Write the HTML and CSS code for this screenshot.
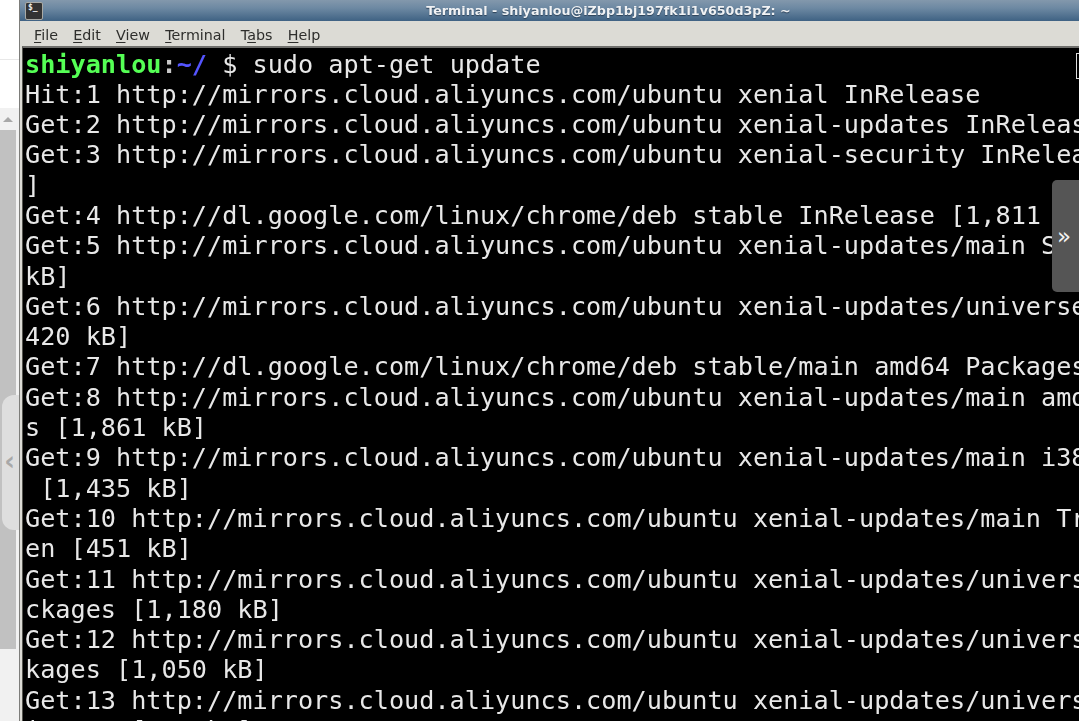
FILE: index.html
```html
<!DOCTYPE html>
<html lang="en">
<head>
<meta charset="utf-8">
<title>Terminal</title>
<link rel="stylesheet" href="styles.css">
</head>
<body>
<div class="page">
  <aside class="side">
    <div class="side-top"><div class="side-rule"></div></div>
    <div class="track">
      <div class="arrow-box"><span class="arrow"></span></div>
      <div class="thumb"></div>
    </div>
  </aside>
  <main class="window">
    <header class="titlebar">
      <div class="app-icon"><span class="app-glyph">$_</span></div>
      <div class="title">Terminal - shiyanlou@iZbp1bj197fk1i1v650d3pZ: ~</div>
    </header>
    <nav class="menubar">
      <span class="menu"><u>F</u>ile</span>
      <span class="menu"><u>E</u>dit</span>
      <span class="menu"><u>V</u>iew</span>
      <span class="menu"><u>T</u>erminal</span>
      <span class="menu">T<u>a</u>bs</span>
      <span class="menu"><u>H</u>elp</span>
    </nav>
    <div class="term-frame">
      <pre class="term"><span class="g">shiyanlou</span><span class="c">:</span><span class="b">~/</span> $ sudo apt-get update
Hit:1 http://mirrors.cloud.aliyuncs.com/ubuntu xenial InRelease
Get:2 http://mirrors.cloud.aliyuncs.com/ubuntu xenial-updates InRelease
Get:3 http://mirrors.cloud.aliyuncs.com/ubuntu xenial-security InRelease
]
Get:4 http://dl.google.com/linux/chrome/deb stable InRelease [1,811 B]
Get:5 http://mirrors.cloud.aliyuncs.com/ubuntu xenial-updates/main Sources
kB]
Get:6 http://mirrors.cloud.aliyuncs.com/ubuntu xenial-updates/universe Sources
420 kB]
Get:7 http://dl.google.com/linux/chrome/deb stable/main amd64 Packages
Get:8 http://mirrors.cloud.aliyuncs.com/ubuntu xenial-updates/main amd64 Package
s [1,861 kB]
Get:9 http://mirrors.cloud.aliyuncs.com/ubuntu xenial-updates/main i386 Packages
 [1,435 kB]
Get:10 http://mirrors.cloud.aliyuncs.com/ubuntu xenial-updates/main Translation-
en [451 kB]
Get:11 http://mirrors.cloud.aliyuncs.com/ubuntu xenial-updates/universe amd64 Pa
ckages [1,180 kB]
Get:12 http://mirrors.cloud.aliyuncs.com/ubuntu xenial-updates/universe i386 Pac
kages [1,050 kB]
Get:13 http://mirrors.cloud.aliyuncs.com/ubuntu xenial-updates/universe Translat
ion-en [345 kB]</pre>
      <span class="cursor"></span>
    </div>
  </main>
</div>
<div class="pill"><span class="pill-chev">‹</span></div>
<div class="handle"><span class="handle-chev">»</span></div>
</body>
</html>
```

FILE: styles.css
```css
html, body {
  margin: 0;
  height: 100%;
  overflow: hidden;
  background: #fff;
}
.page {
  display: flex;
  width: 1079px;
  height: 721px;
  overflow: hidden;
}
.side {
  width: 19px;
  flex: none;
  display: flex;
  flex-direction: column;
}
.side-top {
  height: 108px;
  flex: none;
  background: #fff;
  padding-top: 59px;
  box-sizing: border-box;
}
.side-rule {
  height: 1px;
  background: #e8e8e8;
}
.track {
  flex: 1;
  background: #f1f1f1;
}
.arrow-box {
  height: 22px;
  width: 16px;
  display: flex;
  align-items: center;
  justify-content: center;
}
.arrow {
  width: 0;
  height: 0;
  border-left: 5px solid transparent;
  border-right: 5px solid transparent;
  border-bottom: 5px solid #a8a8a8;
}
.thumb {
  width: 16px;
  height: 519px;
  background: #c1c1c1;
}
.window {
  flex: 1;
  min-width: 0;
  display: flex;
  flex-direction: column;
  background: #dcdbd5;
  border-left: 1px solid #7d7d7a;
}
.titlebar {
  height: 21px;
  flex: none;
  display: flex;
  align-items: center;
  background: linear-gradient(#8398ac, #6c88a2 40%, #3f6283);
}
.app-icon {
  width: 18px;
  height: 18px;
  margin-left: 5px;
  flex: none;
  box-sizing: border-box;
  background: #333;
  border: 1px solid #a9aaa6;
  border-radius: 2px;
  color: #eee;
  font: bold 8px/10px "DejaVu Sans Mono", monospace;
  padding-left: 2px;
}
.app-glyph {
  display: block;
}
.title {
  flex: 1;
  text-align: center;
  margin-left: 95px;
  color: #f0f2f4;
  font: bold 12.7px/21px "DejaVu Sans", sans-serif;
  text-shadow: 0 1px 1px #2c4157;
  filter: blur(0.3px);
}
.menubar {
  height: 25px;
  flex: none;
  display: flex;
  align-items: center;
  gap: 15.2px;
  padding-left: 14px;
  padding-top: 2px;
  box-sizing: border-box;
  font: 14.3px "DejaVu Sans", sans-serif;
  color: #2e2e2c;
  filter: blur(0.3px);
}
.menu u {
  text-underline-offset: 2px;
}
.term-frame {
  flex: 1;
  min-height: 0;
  position: relative;
  margin-left: 2px;
  background: #000;
  border-top: 2px solid #6f6f6c;
  border-left: 1px solid #55554f;
  overflow: hidden;
}
.term {
  margin: 0;
  padding: 1.5px 0 0 2px;
  color: #e8e8e8;
  font: 25.2px/30.3px "DejaVu Sans Mono", monospace;
  white-space: pre;
  filter: blur(0.4px);
}
.g {
  color: #55ff55;
  font-weight: bold;
}
.c {
  color: #c8c8c8;
  font-weight: bold;
}
.b {
  color: #5555ff;
  font-weight: bold;
}
.cursor {
  position: absolute;
  top: 5px;
  right: -14px;
  width: 15px;
  height: 24px;
  border: 1px solid #ddd;
}
.pill {
  position: absolute;
  left: 2px;
  top: 395px;
  width: 17px;
  height: 135px;
  background: #dedede;
  border-radius: 12px 0 0 12px;
  display: flex;
  align-items: center;
  justify-content: center;
}
.pill-chev {
  color: #a8a8a8;
  font: bold 26px/26px "DejaVu Sans", sans-serif;
  margin: -3px 2px 0 0;
}
.handle {
  position: absolute;
  right: 0;
  top: 180px;
  width: 27px;
  height: 112px;
  background: #555;
  border-radius: 5px 0 0 5px;
  display: flex;
  align-items: center;
  justify-content: center;
  padding-right: 3px;
  box-sizing: border-box;
}
.handle-chev {
  color: #f2f2f2;
  font: 23px/23px "DejaVu Sans", sans-serif;
  margin-top: 0;
}
```
